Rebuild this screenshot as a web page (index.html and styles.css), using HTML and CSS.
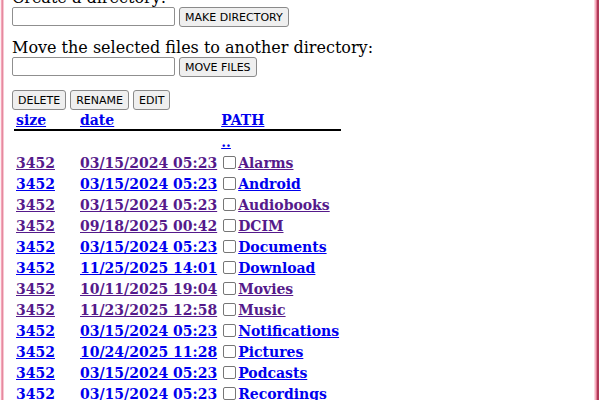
FILE: index.html
```html
<!DOCTYPE html>
<html>
<head>
<meta charset="utf-8">
<link rel="stylesheet" href="styles.css">
</head>
<body>
<div class="frame">
  <div class="content">
    <div class="label">Create a directory:</div>
    <div class="row">
      <input class="field" type="text">
      <button class="btn">MAKE DIRECTORY</button>
    </div>
    <div class="label gap-top">Move the selected files to another directory:</div>
    <div class="row">
      <input class="field" type="text">
      <button class="btn">MOVE FILES</button>
    </div>
    <div class="row actions">
      <button class="btn">DELETE</button>
      <button class="btn">RENAME</button>
      <button class="btn">EDIT</button>
    </div>
    <table class="files">
      <thead>
        <tr>
          <th class="c-size"><a href="#s">size</a></th>
          <th class="c-date"><a href="#d">date</a></th>
          <th class="c-path"><a href="#p">PATH</a></th>
        </tr>
      </thead>
      <tbody>
        <tr><td></td><td></td><td class="c-path up"><a href="#up">..</a></td></tr>
        <tr class="visited"><td><a href="#">3452</a></td><td><a href="#">03/15/2024 05:23</a></td><td class="c-path"><span class="cb"></span><a href="#">Alarms</a></td></tr>
        <tr><td><a href="#">3452</a></td><td><a href="#">03/15/2024 05:23</a></td><td class="c-path"><span class="cb"></span><a href="#">Android</a></td></tr>
        <tr class="visited"><td><a href="#">3452</a></td><td><a href="#">03/15/2024 05:23</a></td><td class="c-path"><span class="cb"></span><a href="#">Audiobooks</a></td></tr>
        <tr class="visited"><td><a href="#">3452</a></td><td><a href="#">09/18/2025 00:42</a></td><td class="c-path"><span class="cb"></span><a href="#">DCIM</a></td></tr>
        <tr><td><a href="#">3452</a></td><td><a href="#">03/15/2024 05:23</a></td><td class="c-path"><span class="cb"></span><a href="#">Documents</a></td></tr>
        <tr><td><a href="#">3452</a></td><td><a href="#">11/25/2025 14:01</a></td><td class="c-path"><span class="cb"></span><a href="#">Download</a></td></tr>
        <tr class="visited"><td><a href="#">3452</a></td><td><a href="#">10/11/2025 19:04</a></td><td class="c-path"><span class="cb"></span><a href="#">Movies</a></td></tr>
        <tr class="visited"><td><a href="#">3452</a></td><td><a href="#">11/23/2025 12:58</a></td><td class="c-path"><span class="cb"></span><a href="#">Music</a></td></tr>
        <tr><td><a href="#">3452</a></td><td><a href="#">03/15/2024 05:23</a></td><td class="c-path"><span class="cb"></span><a href="#">Notifications</a></td></tr>
        <tr><td><a href="#">3452</a></td><td><a href="#">10/24/2025 11:28</a></td><td class="c-path"><span class="cb"></span><a href="#">Pictures</a></td></tr>
        <tr><td><a href="#">3452</a></td><td><a href="#">03/15/2024 05:23</a></td><td class="c-path"><span class="cb"></span><a href="#">Podcasts</a></td></tr>
        <tr><td><a href="#">3452</a></td><td><a href="#">03/15/2024 05:23</a></td><td class="c-path"><span class="cb"></span><a href="#">Recordings</a></td></tr>
      </tbody>
    </table>
  </div>
</div>
</body>
</html>
```
FILE: styles.css
```css
html, body {
  margin: 0;
  padding: 0;
  background: #fff;
}
body {
  font-family: "DejaVu Serif", serif;
  font-size: 16px;
  color: #000;
}
.frame {
  width: 600px;
  height: 400px;
  overflow: hidden;
  box-sizing: border-box;
  background: linear-gradient(to right,
    #fdeef1 0 1px, #f4a6b8 1px 2px, #e48aa0 2px 3px, #f8c8d2 3px 4px,
    #ffffff 4px 594px,
    #fbd6de 594px 595px, #f5b0c0 595px 596px, #e07a94 596px 597px, #b03a58 597px 599px, #ffffff 599px 600px);
}
.content {
  margin-top: -12px;
  padding-left: 12px;
  display: flex;
  flex-direction: column;
  align-items: flex-start;
}
.label {
  line-height: 19px;
  height: 19px;
}
.gap-top {
  margin-top: 12px;
}
.row {
  display: flex;
  gap: 4px;
  height: 19px;
  align-items: flex-start;
}
.actions {
  margin-top: 14px;
}
.field {
  width: 163px;
  height: 19px;
  box-sizing: border-box;
  margin: 0;
  border: 1px solid #8f8f8f;
  border-radius: 2px;
  padding: 0 2px;
  background: #fff;
}
.btn {
  height: 20px;
  box-sizing: border-box;
  margin: 0;
  padding: 0 5px;
  font-family: "DejaVu Sans", sans-serif;
  font-size: 11px;
  color: #000;
  background: #efefef;
  border: 1px solid #8a8a8a;
  border-radius: 3px;
}
.files {
  margin-top: 1px;
  margin-left: 2px;
  border-collapse: collapse;
  font-size: 14px;
  font-weight: bold;
}
.files th, .files td {
  padding: 0 2px;
  height: 21px;
  text-align: left;
  white-space: nowrap;
  vertical-align: middle;
}
.files thead th {
  border-bottom: 2px solid #000;
  height: 18px;
  padding-bottom: 1px;
  vertical-align: bottom;
}
.c-size {
  width: 60px;
}
.c-path {
  width: 116px;
}
.files a {
  color: #0000ee;
  text-decoration: underline;
}
.visited a {
  color: #551a8b;
}
.cb {
  display: inline-block;
  width: 11px;
  height: 11px;
  border: 1px solid #767676;
  border-radius: 2px;
  margin: 0 2px 0 2px;
  vertical-align: -1px;
  background: #fff;
}
```
